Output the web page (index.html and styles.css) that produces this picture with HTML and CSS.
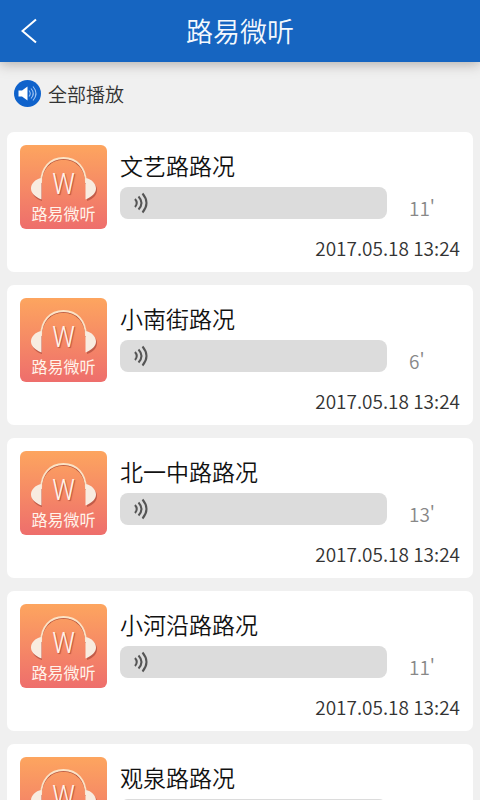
FILE: index.html
```html
<!DOCTYPE html>
<html lang="zh-CN">
<head>
<meta charset="utf-8">
<meta name="viewport" content="width=device-width, initial-scale=1">
<title>路易微听</title>
<link rel="stylesheet" href="styles.css">
</head>
<body>
<svg class="defs" aria-hidden="true">
  <symbol id="headphones" viewBox="0 0 87 84">
    <g>
      <path d="M21 39C21 24 30 14 43.500 14S66 24 66 39" fill="none" stroke="#b5523c" stroke-width="1.500"/>
      <path d="M22 35v21C16 54 12 50 12 45s4-9 10-10zM67 35v21c6-2 10-6 10-11s-4-9-10-10z" fill="#c25c49"/>
    </g>
    <path d="M21 38C21 23 30 13 43.500 13S66 23 66 38" fill="none" stroke="#fbe3c6" stroke-width="1.800"/>
    <path d="M21.500 33v21.500C15 52 11 48 11 43.500s4-9.500 10.500-10.500zM65.500 33v21.500c6.500-2.500 10.500-6.500 10.500-11s-4-9.500-10.500-10.500z" fill="#f8ece0"/>
  </symbol>
  <symbol id="waves" viewBox="0 0 16 22">
    <g fill="none" stroke="#555" stroke-width="2">
      <path d="M2 7q3.500 4 0 8"/>
      <path d="M5.500 4.500q6 6.500 0 13"/>
      <path d="M9.500 1.500q8 9.500 0 19"/>
    </g>
  </symbol>
</svg>

<header class="topbar">
  <button class="back" aria-label="返回">
    <svg viewBox="0 0 16 26"><path d="M15 1.500L1.500 13 15 24.500"/></svg>
  </button>
  <h1>路易微听</h1>
</header>

<main class="content">
  <button class="play-all">
    <svg viewBox="0 0 27 27" aria-hidden="true">
      <circle cx="13.500" cy="13.500" r="13.500" fill="#0f62cb"/>
      <path d="M4.500 10.500h3.500l5.500-4v14l-5.500-4H4.500z" fill="#fff"/>
      <g fill="none" stroke="#9fc3f2" stroke-width="1.100">
        <path d="M15 10.500q2.500 3 0 6"/>
        <path d="M17 8.500q4.500 5 0 10"/>
        <path d="M19 6.500q6 7 0 14"/>
      </g>
    </svg>
    <span>全部播放</span>
  </button>

  <ul class="list">
    <li class="card">
      <div class="cover"><svg aria-hidden="true"><use href="#headphones"/></svg><span class="mark">W</span><span class="name">路易微听</span></div>
      <div class="info">
        <h2>文艺路路况</h2>
        <div class="clip"><button class="voice" aria-label="播放 文艺路路况"><svg><use href="#waves"/></svg></button><span class="length">11'</span></div>
        <time datetime="2017-05-18T13:24">2017.05.18 13:24</time>
      </div>
    </li>
    <li class="card">
      <div class="cover"><svg aria-hidden="true"><use href="#headphones"/></svg><span class="mark">W</span><span class="name">路易微听</span></div>
      <div class="info">
        <h2>小南街路况</h2>
        <div class="clip"><button class="voice" aria-label="播放 小南街路况"><svg><use href="#waves"/></svg></button><span class="length">6'</span></div>
        <time datetime="2017-05-18T13:24">2017.05.18 13:24</time>
      </div>
    </li>
    <li class="card">
      <div class="cover"><svg aria-hidden="true"><use href="#headphones"/></svg><span class="mark">W</span><span class="name">路易微听</span></div>
      <div class="info">
        <h2>北一中路路况</h2>
        <div class="clip"><button class="voice" aria-label="播放 北一中路路况"><svg><use href="#waves"/></svg></button><span class="length">13'</span></div>
        <time datetime="2017-05-18T13:24">2017.05.18 13:24</time>
      </div>
    </li>
    <li class="card">
      <div class="cover"><svg aria-hidden="true"><use href="#headphones"/></svg><span class="mark">W</span><span class="name">路易微听</span></div>
      <div class="info">
        <h2>小河沿路路况</h2>
        <div class="clip"><button class="voice" aria-label="播放 小河沿路路况"><svg><use href="#waves"/></svg></button><span class="length">11'</span></div>
        <time datetime="2017-05-18T13:24">2017.05.18 13:24</time>
      </div>
    </li>
    <li class="card">
      <div class="cover"><svg aria-hidden="true"><use href="#headphones"/></svg><span class="mark">W</span></div>
      <div class="info">
        <h2>观泉路路况</h2>
        <div class="clip"><button class="voice" aria-label="播放 观泉路路况"><svg><use href="#waves"/></svg></button></div>
      </div>
    </li>
  </ul>
</main>
</body>
</html>
```
FILE: styles.css
```css
* {
  box-sizing: border-box;
}

body {
  margin: 0;
  height: 100vh;
  display: flex;
  flex-direction: column;
  background: #f0f0f0;
  color: #111;
  font-family: "Noto Sans CJK SC", sans-serif;
  font-weight: 350;
}

button {
  border: 0;
  padding: 0;
  background: none;
  font: inherit;
  color: inherit;
  cursor: pointer;
}

h1,
h2 {
  margin: 0;
  font-weight: 350;
}

.defs {
  position: absolute;
  width: 0;
  height: 0;
}

.topbar {
  flex: none;
  display: grid;
  grid-template-columns: 60px 1fr 60px;
  align-items: center;
  height: 62px;
  background: #1665c1;
  color: #f4f8fd;
  box-shadow: 0 2px 12px rgba(60, 50, 40, 0.35);
  z-index: 1;
}

.topbar h1 {
  text-align: center;
  font-size: 27px;
  line-height: 40px;
}

.back {
  display: flex;
  align-items: center;
  height: 62px;
  padding-left: 21px;
}

.back svg {
  width: 16px;
  height: 26px;
  fill: none;
  stroke: #fff;
  stroke-width: 2;
}

.content {
  flex: 1;
  min-height: 0;
  overflow-y: auto;
  scrollbar-width: none;
  padding: 18px 7px 0;
}

.play-all {
  display: flex;
  align-items: center;
  gap: 7px;
  height: 27px;
  margin: 0 0 25px 7px;
  font-size: 19px;
  line-height: 27px;
  color: #333;
}

.play-all svg {
  width: 27px;
  height: 27px;
}

.list {
  display: flex;
  flex-direction: column;
  gap: 13px;
  margin: 0;
  padding: 0;
  list-style: none;
}

.card {
  display: flex;
  align-items: flex-start;
  gap: 13px;
  min-height: 140px;
  padding: 13px 13px 12px;
  border-radius: 7px;
  background: #fff;
}

.cover {
  flex: none;
  position: relative;
  display: flex;
  flex-direction: column;
  align-items: center;
  width: 87px;
  height: 84px;
  padding-top: 20px;
  border-radius: 6px;
  background: linear-gradient(#fda55f, #ee6e6c);
  color: #fff3ea;
}

.cover svg {
  position: absolute;
  inset: 0;
  width: 100%;
  height: 100%;
}

.mark {
  position: relative;
  font-family: "Roboto Condensed", "Open Sans Condensed", Roboto, sans-serif;
  font-weight: 300;
  font-size: 30px;
  line-height: 37px;
  text-shadow: 1px 1px 1px #b5523c;
}

.name {
  font-size: 16px;
  font-weight: 400;
  line-height: 22px;
}

.info {
  flex: 1;
  min-width: 0;
  display: flex;
  flex-direction: column;
}

.info h2 {
  margin-bottom: 2px;
  font-size: 23px;
  line-height: 40px;
}

.clip {
  display: flex;
  align-items: flex-end;
  gap: 22px;
  margin-bottom: 17px;
}

.voice {
  display: flex;
  align-items: center;
  width: 267px;
  height: 32px;
  padding-left: 13px;
  border-radius: 8px;
  background: #dcdcdc;
}

.voice svg {
  width: 16px;
  height: 22px;
}

.length {
  font-size: 19px;
  line-height: 22px;
  color: #888;
}

time {
  text-align: right;
  font-size: 19px;
  line-height: 24px;
  color: #333;
}
```
